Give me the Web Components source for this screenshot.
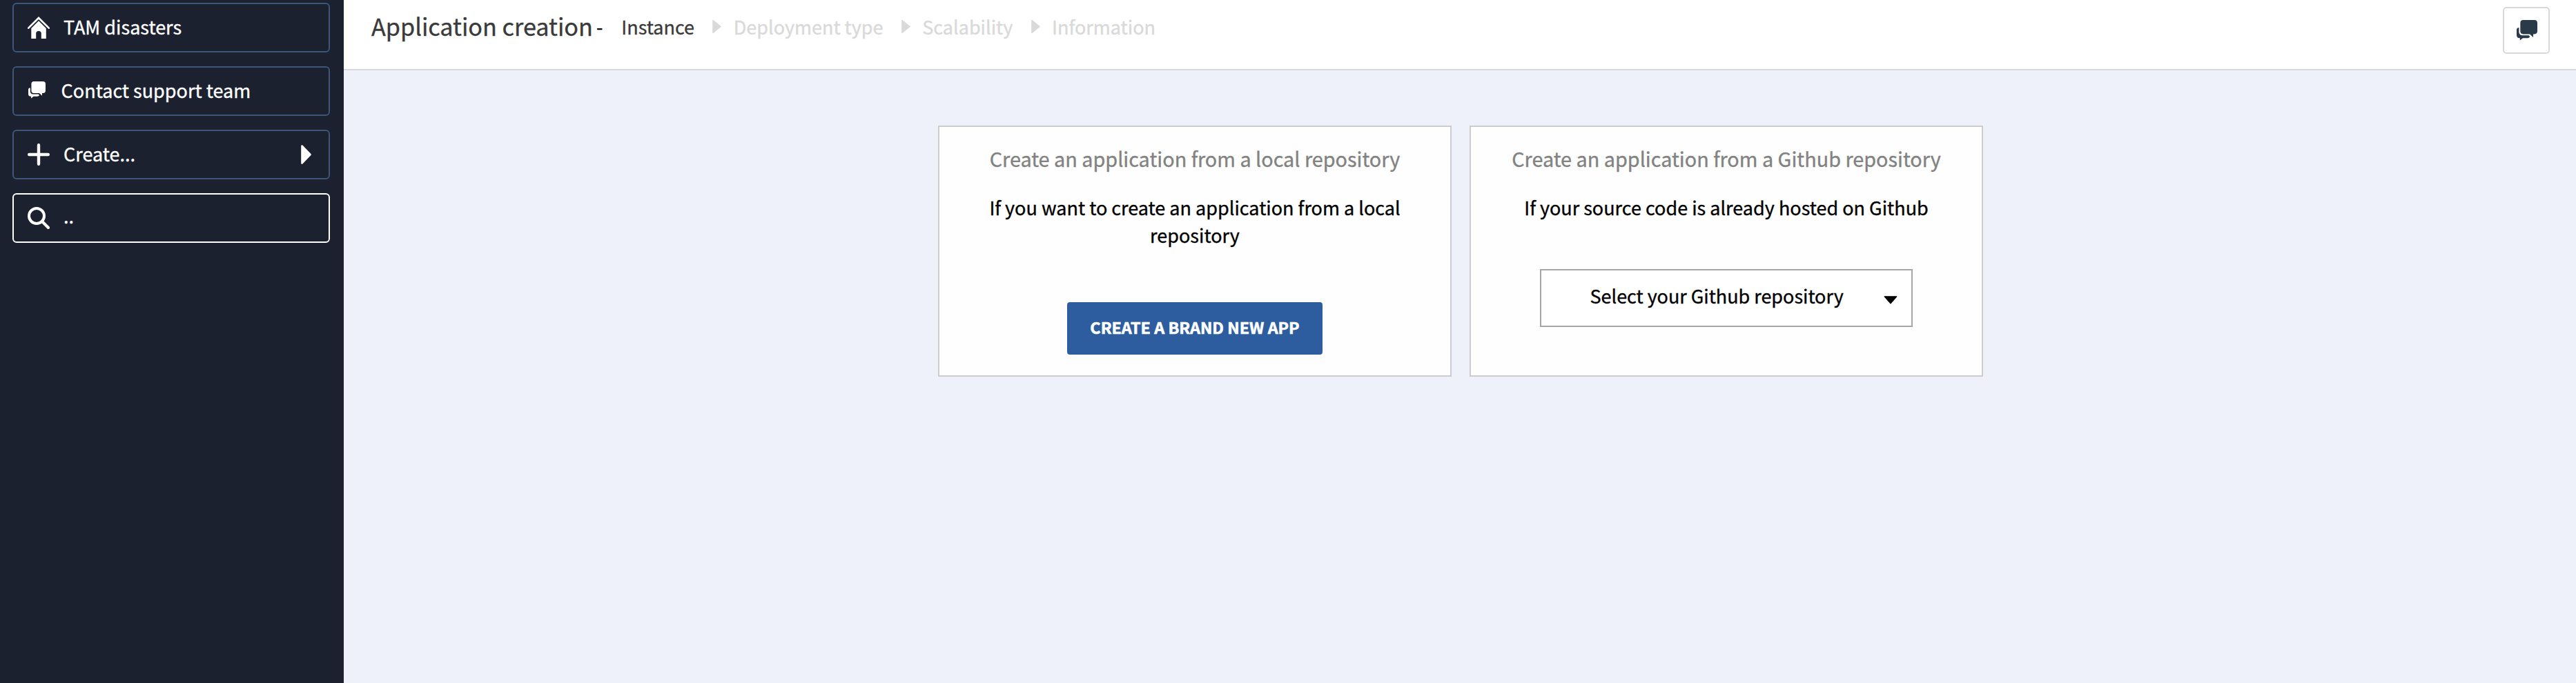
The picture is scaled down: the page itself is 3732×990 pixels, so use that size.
<!DOCTYPE html>
<html lang="en">
<head>
<meta charset="utf-8">
<title>Application creation</title>
<style>
  html, body { margin: 0; height: 100%; }
  body { font-family: "Noto Sans CJK SC", "Open Sans", sans-serif; font-size: 27px; overflow: hidden; }
</style>
</head>
<body>
<app-shell>
  <side-bar slot="side">
    <side-item icon="home">TAM disasters</side-item>
    <side-item icon="chat">Contact support team</side-item>
    <side-item icon="plus" more>Create...</side-item>
    <side-item icon="search" class="search">..</side-item>
  </side-bar>
  <page-header slot="header" heading="Application creation">
    <wizard-step active>Instance</wizard-step>
    <wizard-step>Deployment type</wizard-step>
    <wizard-step>Scalability</wizard-step>
    <wizard-step>Information</wizard-step>
  </page-header>
  <choice-card>
    <span slot="title">Create an application from a local repository</span>
    If you want to create an application from a local repository
    <primary-button slot="action">CREATE A BRAND NEW APP</primary-button>
  </choice-card>
  <choice-card>
    <span slot="title">Create an application from a Github repository</span>
    If your source code is already hosted on Github
    <repo-select slot="action">Select your Github repository</repo-select>
  </choice-card>
</app-shell>

<script>
const define = (name, html, setup) => {
  customElements.define(name, class extends HTMLElement {
    connectedCallback() {
      if (this.shadowRoot) return;
      const root = this.attachShadow({ mode: 'open' });
      root.innerHTML = html;
      if (setup) setup(this, root);
    }
  });
};

const CHAT = `<path d="M9.6 0H25.6Q30 0 30 4.4V16Q30 20.4 25.6 20.4H24V25L19 20.4H9.6Q5.3 20.4 5.3 16V4.4Q5.3 0 9.6 0Z"/><path d="M0 14.5Q0 11.3 3.4 11V17.5Q3.8 22 8.3 22.3H17.6L19.3 24Q18.4 26.2 15.5 26.2H9L4.8 29.6V26.2Q0 26.2 0 22Z"/>`;

const ICONS = {
  home: { box: '0 0 32 32', w: 32, h: 32, art: `<path d="M1.2 16.6 16 2 30.8 16.6" fill="none" stroke="currentColor" stroke-width="2.7" stroke-linecap="round"/><path d="M5.3 17 16 6.2 26.8 17V32H19.8V24.5Q19.8 21 16 21T12.2 24.5V32H5.3Z"/>` },
  chat: { box: '0 0 30 30', w: 25, h: 25, art: CHAT },
  plus: { box: '0 0 32 32', w: 32, h: 32, art: `<path d="M16 2.2V29.8M2.2 16H29.8" fill="none" stroke="currentColor" stroke-width="4.4" stroke-linecap="round"/>` },
  search: { box: '0 0 32 32', w: 32, h: 32, art: `<circle cx="13" cy="13" r="11" fill="none" stroke="currentColor" stroke-width="4"/><path d="M21.5 21.5 30 30" fill="none" stroke="currentColor" stroke-width="4.2" stroke-linecap="round"/>` },
  bubbles: { box: '0 0 30 30', w: 30, h: 30, art: CHAT }
};

define('ui-icon', `<style>:host{display:block;flex:none;line-height:0}svg{display:block;fill:currentColor}</style>`, (el, root) => {
  const i = ICONS[el.getAttribute('name')];
  root.innerHTML += `<svg width="${i.w}" height="${i.h}" viewBox="${i.box}">${i.art}</svg>`;
});

define('app-shell', `<style>
  :host{display:grid;grid-template-columns:498px 1fr;grid-template-rows:102px 1fr;height:100vh;background:#eef1fa}
  slot[name=side]{display:block;grid-row:1/3;background:#1c2130}
  slot[name=header]{display:block}
  main{display:flex;justify-content:center;align-items:flex-start;gap:26px;padding:80px 0 0 2px}
</style><slot name="side"></slot><slot name="header"></slot><main><slot></slot></main>`);

define('side-bar', `<style>
  :host{display:flex;flex-direction:column;gap:20px;padding:4px 20px 0 18px}
</style><slot></slot>`);

define('side-item', `<style>
  :host{display:flex;align-items:center;box-sizing:border-box;height:72px;padding:0 25px 0 20px;border:2px solid #3c5678;border-radius:6px;color:#fff}
  :host(.search){border-color:#fff}
  .icon{width:32px}
  :host([icon=chat]) .icon{width:27.6px;padding-left:1px;margin-top:-3px}
  .label{flex:1;margin-left:20px;line-height:40px;padding-bottom:2px;-webkit-text-stroke:.35px currentColor}
  :host(.search) .label{padding-bottom:6px}
</style><span class="icon"></span><span class="label"><slot></slot></span>`, (el, root) => {
  root.querySelector('.icon').innerHTML = `<ui-icon name="${el.getAttribute('icon')}"></ui-icon>`;
  if (el.hasAttribute('more'))
    root.innerHTML += `<svg width="15" height="28" viewBox="0 0 15 28"><path d="M1.5 1.5 13.5 14 1.5 26.5Z" fill="#fff" stroke="#fff" stroke-width="2.6" stroke-linejoin="round"/></svg>`;
});

define('page-header', `<style>
  :host{display:flex;box-sizing:border-box;height:102px;padding:0 38px 0 40px;background:#fff;border-bottom:2px solid #d9dadc}
  h1{margin:0;font-weight:400;font-size:34.2px;line-height:74px;color:#3a3a3a;-webkit-text-stroke:.35px currentColor;white-space:nowrap}
  .dash{margin:0 27px 0 5px;line-height:78px;color:#000;-webkit-text-stroke:.35px currentColor}
  nav{display:flex;flex:1}
  button{width:68px;height:68px;margin:10px 0 0;padding:0;display:flex;align-items:center;justify-content:center;background:#fff;border:2px solid #d9d9d9;border-radius:5px;color:#2b3a48}
  ui-icon{margin:0 0 0 1px}
</style><h1></h1><span class="dash">-</span><nav><slot></slot></nav><button><ui-icon name="bubbles"></ui-icon></button>`, (el, root) => {
  root.querySelector('h1').textContent = el.getAttribute('heading');
});

define('wizard-step', `<style>
  :host{display:flex;color:#d9d9d9;line-height:78px;white-space:nowrap;-webkit-text-stroke:.35px currentColor}
  :host([active]){color:#3a3a3a}
  svg{margin:28px 17.4px 0 26.3px}
  :host([active]) svg{display:none}
</style><svg width="13" height="21" viewBox="0 0 13 21"><path d="M1 1.5 12 10.5 1 19.5Z" fill="#d9d9d9" stroke="#d9d9d9" stroke-width="1.6" stroke-linejoin="round"/></svg><slot></slot>`);

define('choice-card', `<style>
  :host{display:flex;flex-direction:column;align-items:center;box-sizing:border-box;width:744px;height:364px;padding:26px 60px 0;background:#fefefe;border:2px solid #ccc;text-align:center}
  h2{margin:0 0 31px;font-weight:400;font-size:28.8px;line-height:40px;color:#828282;white-space:nowrap;-webkit-text-stroke:.35px currentColor}
  p{margin:0;height:79px;line-height:40px;color:#000;-webkit-text-stroke:.35px currentColor}
</style><h2><slot name="title"></slot></h2><p><slot></slot></p><slot name="action"></slot>`);

define('primary-button', `<style>
  :host{display:block;box-sizing:border-box;width:370px;height:76px;margin-top:78px;padding-bottom:4px;background:#2d5d9f;border-radius:4px;color:#fff;font-weight:700;font-size:23.3px;line-height:72px;text-align:center;white-space:nowrap;-webkit-text-stroke:.6px currentColor}
</style><slot></slot>`);

define('repo-select', `<style>
  :host{display:flex;box-sizing:border-box;width:540px;height:84px;margin-top:30px;padding-left:70.5px;border:2px solid #a6a6a6;background:#fff;line-height:74px;white-space:nowrap;letter-spacing:-.03px;-webkit-text-stroke:.35px currentColor}
  span{flex:1;text-align:left}
  svg{margin:36px 20px 0 0}
</style><span><slot></slot></span><svg width="20" height="13" viewBox="0 0 20 13"><path d="M1.2 1.8H18.8L10 11.8Z" stroke="#000" stroke-width="1.2" stroke-linejoin="round"/></svg>`);
</script>
</body>
</html>
